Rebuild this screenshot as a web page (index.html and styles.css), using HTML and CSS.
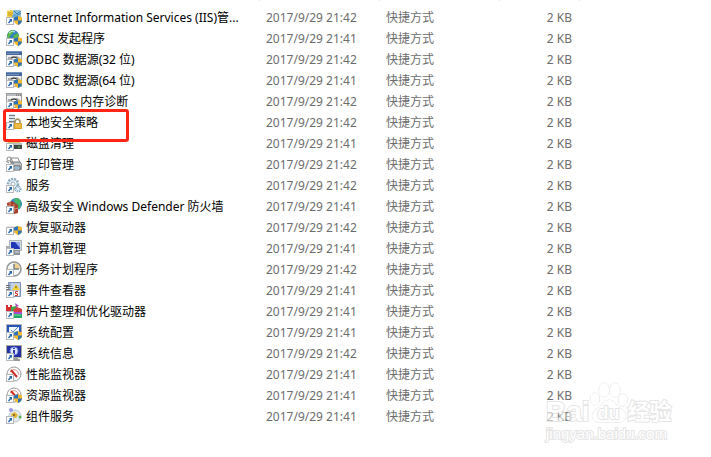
FILE: index.html
```
<!DOCTYPE html>
<html lang="zh-Hans">
<head>
	<meta charset="utf-8" />
	<meta name="viewport" content="width=device-width, initial-scale=1.0">
	<title>管理工具</title>
	<link rel="stylesheet" href="styles.css">
</head>
<body>

	<!-- shared icon parts -->
	<svg class="defs" aria-hidden="true">
		<symbol id="arrow" viewBox="0 0 16 16">
			<rect x=".5" y="8.500" width="7" height="7" fill="#fff" stroke="#b4b8bc"/>
			<path d="M3 10h3v3L5 12.200 3 14.500 2 13.500l2-2.500z" fill="#2467a8"/>
		</symbol>
		<symbol id="shield" viewBox="0 0 16 16">
			<path d="M12 7l4 1.500v3Q15.500 14.500 12 16 8.500 14.500 8 11.500v-3z" fill="#f3b82c"/>
			<path d="M12 7v4.500H8v-3zM12 11.500h4Q15.500 14.500 12 16z" fill="#2d73b8"/>
		</symbol>
		<symbol id="odbc" viewBox="0 0 16 16">
			<rect x=".5" y=".5" width="15" height="14" fill="#eef0f2" stroke="#a3aebb"/>
			<path d="M0 0h16v4H0z" fill="#46679c"/>
			<path d="M0 0h16v1H0zM1 2h12v1H1z" fill="#7593bf"/>
			<path d="M2 7h3l2-1h4l3 2" fill="none" stroke="#aaa" stroke-width="2"/>
			<path d="M5 7q3-2 6 0" fill="none" stroke="#333"/>
			<use href="#shield"/><use href="#arrow"/>
		</symbol>
		<symbol id="gauge" viewBox="0 0 16 16">
			<circle cx="8" cy="8" r="7" fill="#fff" stroke="#999"/>
			<path d="M4 6q4-5 8 0l1 3" fill="none" stroke="#d99a93"/>
			<path d="M5 4l6 7" stroke="#cf2b20" stroke-width="2"/>
		</symbol>
	</svg>

	<main class="file-list">
		<table>
			<colgroup>
				<col class="col-name"><col class="col-date"><col class="col-type"><col class="col-size"><col>
			</colgroup>
			<thead>
				<tr><th></th><th></th><th></th><th></th><th></th></tr>
			</thead>
			<tbody>
				<tr>
					<td><a href="#"><svg viewBox="0 0 16 16"><path d="M1 2l5-1 2 2v6H1z" fill="#f3cf45"/><path d="M2 4h5M2 6h4" stroke="#c89420"/><path d="M7 1h7l1 3v4H7z" fill="#8fc1df"/><path d="M8 2l3 3 4-3M10 7l5-3" stroke="#397ea9" fill="none"/><circle cx="9" cy="8" r="3" fill="#63a9d4"/><use href="#shield"/><use href="#arrow"/></svg><span>Internet Information Services (IIS)管...</span></a></td>
					<td>2017/9/29 21:42</td><td>快捷方式</td><td>2 KB</td><td></td>
				</tr>
				<tr>
					<td><a href="#"><svg viewBox="0 0 16 16"><circle cx="7" cy="6" r="6" fill="#347fc0"/><path d="M2 3q3-4 6-3L7 3 4 6 3 9 1 7zM8 5l4-2 1 4-3 4-3-2z" fill="#5ab848"/><path d="M3 3q3-3 6-1" stroke="#cbefff" fill="none"/><use href="#shield"/><use href="#arrow"/></svg><span>iSCSI 发起程序</span></a></td>
					<td>2017/9/29 21:41</td><td>快捷方式</td><td>2 KB</td><td></td>
				</tr>
				<tr>
					<td><a href="#"><svg viewBox="0 0 16 16"><use href="#odbc"/></svg><span>ODBC 数据源(32 位)</span></a></td>
					<td>2017/9/29 21:42</td><td>快捷方式</td><td>2 KB</td><td></td>
				</tr>
				<tr>
					<td><a href="#"><svg viewBox="0 0 16 16"><use href="#odbc"/></svg><span>ODBC 数据源(64 位)</span></a></td>
					<td>2017/9/29 21:41</td><td>快捷方式</td><td>2 KB</td><td></td>
				</tr>
				<tr>
					<td><a href="#"><svg viewBox="0 0 16 16"><rect x=".5" y=".5" width="15" height="14" fill="#f7f7f7" stroke="#9b9b9b"/><path d="M1 2h14" stroke="#b9bdc1" stroke-width="2"/><path d="M10 2h1M12 2h1M14 2h1" stroke="#555"/><path d="M2 7h3l2-1h4l3 2" fill="none" stroke="#aaa" stroke-width="2"/><path d="M5 7q3-2 6 0" stroke="#333" fill="none"/><use href="#shield"/><use href="#arrow"/></svg><span>Windows 内存诊断</span></a></td>
					<td>2017/9/29 21:42</td><td>快捷方式</td><td>2 KB</td><td></td>
				</tr>
				<tr class="marked">
					<td><a href="#"><svg viewBox="0 0 16 16"><path d="M3 0h6v13H3z" fill="#dfe6e9"/><path d="M3 1.500h6M3 4.500h6M3 7.500h6" stroke="#6c7a82"/><path d="M9 10V7q2.500-4 5 0v3" fill="none" stroke="#9b8c58" stroke-width="1.500"/><path d="M8 9h8v6H8z" fill="#d9a022"/><path d="M9 11h6M9 13h6" stroke="#ffd866"/><use href="#arrow"/></svg><span>本地安全策略</span></a></td>
					<td>2017/9/29 21:42</td><td>快捷方式</td><td>2 KB</td><td></td>
				</tr>
				<tr>
					<td><a href="#"><svg viewBox="0 0 16 16"><path d="M3 4h10l2 5H1z" fill="#d8c56b"/><path d="M2 8h14v5H2z" fill="#b9bfc0"/><path d="M8 10h8v4H8z" fill="#404745"/><path d="M12 12h2" stroke="#60db48"/><use href="#arrow"/></svg><span>磁盘清理</span></a></td>
					<td>2017/9/29 21:41</td><td>快捷方式</td><td>2 KB</td><td></td>
				</tr>
				<tr>
					<td><a href="#"><svg viewBox="0 0 16 16"><path d="M5 2h7l2 5H7z" fill="#fff" stroke="#888"/><path d="M5 6h9l2 3v4H5z" fill="#bfc3c5" stroke="#74797c"/><path d="M8 10h6v4H8z" fill="#e9f4fd" stroke="#555"/><path d="M9 12h4" stroke="#328acb"/><circle cx="3" cy="3" r="2" fill="none" stroke="#888"/><path d="M4 5l4 3M0 5l3 2" stroke="#777"/><use href="#arrow"/></svg><span>打印管理</span></a></td>
					<td>2017/9/29 21:42</td><td>快捷方式</td><td>2 KB</td><td></td>
				</tr>
				<tr>
					<td><a href="#"><svg viewBox="0 0 16 16"><circle cx="7" cy="7" r="5" fill="#e5eff5" stroke="#8eabbc" stroke-width="2.500" stroke-dasharray="2 1"/><circle cx="7" cy="7" r="2" fill="#fff" stroke="#9bb4c3"/><circle cx="12" cy="12" r="2.500" fill="#e7f2fa" stroke="#6c9cbc" stroke-width="2" stroke-dasharray="1 1"/><use href="#arrow"/></svg><span>服务</span></a></td>
					<td>2017/9/29 21:42</td><td>快捷方式</td><td>2 KB</td><td></td>
				</tr>
				<tr>
					<td><a href="#"><svg viewBox="0 0 16 16"><circle cx="10" cy="6" r="6" fill="#3189c4"/><path d="M8 1l4-1 3 3-2 5-4-3zM12 7l3-1-1 4-3 1z" fill="#48b765"/><path d="M1 5l5-2 6 4v8l-4 1-7-4z" fill="#a5422e"/><path d="M1 7l8 4 3-1M4 4v5M8 6v8" stroke="#dc9277" fill="none"/><use href="#arrow"/></svg><span>高级安全 Windows Defender 防火墙</span></a></td>
					<td>2017/9/29 21:41</td><td>快捷方式</td><td>2 KB</td><td></td>
				</tr>
				<tr>
					<td><a href="#"><svg viewBox="0 0 16 16"><path d="M2 7h12l2 2v5H0V9z" fill="#bfc1c2"/><path d="M2 7h12l1 2H1z" fill="#e2e2e2"/><use href="#shield"/><use href="#arrow"/></svg><span>恢复驱动器</span></a></td>
					<td>2017/9/29 21:42</td><td>快捷方式</td><td>2 KB</td><td></td>
				</tr>
				<tr>
					<td><a href="#"><svg viewBox="0 0 16 16"><path d="M0 6h5v5H0z" fill="#a8adb1"/><path d="M3.500 .5h12v10h-12z" fill="#d7dce1" stroke="#a9b1b9"/><path d="M5 2h9v7H5z" fill="#2038b8"/><path d="M9 2h5v6z" fill="#93a7ef"/><path d="M8 10h6v5H8z" fill="#8c9499"/><path d="M9 12h4" stroke="#d9dfe2"/><use href="#arrow"/></svg><span>计算机管理</span></a></td>
					<td>2017/9/29 21:41</td><td>快捷方式</td><td>2 KB</td><td></td>
				</tr>
				<tr>
					<td><a href="#"><svg viewBox="0 0 16 16"><circle cx="8" cy="8" r="7" fill="#f5f7f8" stroke="#929799" stroke-width="1.500"/><path d="M8 8V2a6 6 0 0 1 6 6z" fill="#f0d08b"/><path d="M8 3v5h5" fill="none" stroke="#76848b" stroke-width="1.500"/><use href="#arrow"/></svg><span>任务计划程序</span></a></td>
					<td>2017/9/29 21:42</td><td>快捷方式</td><td>2 KB</td><td></td>
				</tr>
				<tr>
					<td><a href="#"><svg viewBox="0 0 16 16"><path d="M2.500 .5h12v14h-12z" fill="#9db5dc" stroke="#7d90b5"/><path d="M5 1h9v13H5z" fill="#c3d1e8"/><path d="M0 3.500h4M0 5.500h4M0 7.500h4" stroke="#777"/><path d="M10 2l4 6H6z" fill="#f3ce35"/><path d="M10 4v2" stroke="#685109"/><path d="M8 9h5v5H8z" fill="#fff"/><path d="M12 9.500H9.500v2h2v2H9" stroke="#d53c2d" fill="none"/><use href="#arrow"/></svg><span>事件查看器</span></a></td>
					<td>2017/9/29 21:41</td><td>快捷方式</td><td>2 KB</td><td></td>
				</tr>
				<tr>
					<td><a href="#"><svg viewBox="0 0 16 16"><path d="M0 2h2v2h2V2h2v6H0z" fill="#d82d32"/><path d="M5 4l5-1 2 3-4 3H5z" fill="#3aa44c"/><path d="M9 0l4 3-3 1z" fill="#a842ba"/><path d="M7 7l4-3 5 2v4H7z" fill="#d83f42"/><path d="M7 9h9v3H7z" fill="#a64ed1"/><path d="M7 11h9v4H7z" fill="#26a66d"/><path d="M8 12h7" stroke="#71e09a"/><use href="#arrow"/></svg><span>碎片整理和优化驱动器</span></a></td>
					<td>2017/9/29 21:41</td><td>快捷方式</td><td>2 KB</td><td></td>
				</tr>
				<tr>
					<td><a href="#"><svg viewBox="0 0 16 16"><path d="M0 0h16v14H0z" fill="#aeb2b5"/><path d="M1 1h14v11H1z" fill="#2754ba"/><path d="M3 3h10v8H3z" fill="#eef6ff"/><path d="M5 6l2 2 5-5" fill="none" stroke="#608dcb"/><use href="#shield"/><use href="#arrow"/></svg><span>系统配置</span></a></td>
					<td>2017/9/29 21:41</td><td>快捷方式</td><td>2 KB</td><td></td>
				</tr>
				<tr>
					<td><a href="#"><svg viewBox="0 0 16 16"><path d="M0 0h16v13H0z" fill="#aaa99f"/><path d="M1 1h14v11H1z" fill="#2331a4"/><circle cx="8" cy="6" r="4" fill="#e4e8ff" stroke="#7486dc"/><path d="M8 3v1M8 5v4" stroke="#2638b4" stroke-width="2"/><path d="M8 13h4v1h2v2H7z" fill="#999"/><use href="#arrow"/></svg><span>系统信息</span></a></td>
					<td>2017/9/29 21:42</td><td>快捷方式</td><td>2 KB</td><td></td>
				</tr>
				<tr>
					<td><a href="#"><svg viewBox="0 0 16 16"><use href="#gauge"/><use href="#arrow"/></svg><span>性能监视器</span></a></td>
					<td>2017/9/29 21:41</td><td>快捷方式</td><td>2 KB</td><td></td>
				</tr>
				<tr>
					<td><a href="#"><svg viewBox="0 0 16 16"><use href="#gauge"/><use href="#shield"/><use href="#arrow"/></svg><span>资源监视器</span></a></td>
					<td>2017/9/29 21:41</td><td>快捷方式</td><td>2 KB</td><td></td>
				</tr>
				<tr>
					<td><a href="#"><svg viewBox="0 0 16 16"><circle cx="9" cy="8" r="6" fill="#e2eaef" stroke="#bdc7cc"/><circle cx="5" cy="2" r="2" fill="#9999df"/><path d="M5 6l4-2 3 3-2 3H6z" fill="#e3b832"/><circle cx="8" cy="7" r="1" fill="#6b5c25"/><circle cx="14" cy="9" r="1.500" fill="#5bb45a"/><use href="#arrow"/></svg><span>组件服务</span></a></td>
					<td>2017/9/29 21:41</td><td>快捷方式</td><td>2 KB</td><td></td>
				</tr>
			</tbody>
		</table>

		<div class="watermark">
			<div class="brand">
				<span>Bai</span>
				<div class="paw">
					<svg viewBox="0 0 38 42">
						<ellipse cx="5" cy="17" rx="4.500" ry="6"/>
						<ellipse cx="14" cy="8" rx="5" ry="7"/>
						<ellipse cx="25" cy="8" rx="5" ry="7"/>
						<ellipse cx="33" cy="18" rx="4.500" ry="6"/>
						<path d="M19 18C14 18 12 23 8 26 3 29 1 33 3 37c3 5 10 3 16 3s13 2 16-3c2-4 0-8-5-11-4-3-6-8-11-8z"/>
					</svg>
					<span>du</span>
				</div>
				<span class="cn">经验</span>
			</div>
			<div class="site">jingyan.baidu.com</div>
		</div>
	</main>

</body>
</html>
```

FILE: styles.css
```
/* global */
*,
:after,
:before {
	box-sizing: border-box;
}
body {
	margin: 0;
	background: #fff;
	color: #000;
	font-family: "Noto Sans","Noto Sans CJK SC",sans-serif;
	font-size: 12px;
	line-height: 20px;
}
a {color:inherit;text-decoration:none;}
.defs {position:absolute;width:0;height:0;}

/* file list */
.file-list {position:relative;padding-bottom:30px;}
.file-list table {
	width: 100%;
	table-layout: fixed;
	border-collapse: collapse;
}
.col-name {width:260px;}
.col-date {width:120px;}
.col-type {width:120px;}
.col-size {width:80px;}

.file-list th {
	height: 7px;
	padding: 0;
	background: linear-gradient(#e0e0e0,#e0e0e0) right top / 1px 1px no-repeat;
}
.file-list th:last-child {background:none;}
.file-list td {
	height: 21px;
	padding: 1px 6px 0;
	color: #6d6d6d;
	vertical-align: top;
	white-space: nowrap;
}
.file-list td:first-child {position:relative;color:#000;}
.file-list td:nth-child(4) {padding-right:8px;text-align:right;}
.file-list td a {display:flex;align-items:flex-start;gap:4px;}
.file-list td svg {flex:none;width:16px;height:16px;margin-top:1px;}

/* red frame round the marked row */
.marked td:first-child:after {
	content: "";
	position: absolute;
	top: -3px;
	left: 3px;
	width: 126px;
	height: 33px;
	border: 3px solid #ff2616;
	border-radius: 3px;
	pointer-events: none;
	z-index: 1;
}

/* watermark */
.watermark {
	position: absolute;
	right: 39px;
	bottom: 13px;
	width: 126px;
	color: #fff;
	font-family: "Liberation Sans","Noto Sans CJK SC",sans-serif;
	opacity: .6;
	pointer-events: none;
	-webkit-text-stroke: 2px #d4d4d4;
	paint-order: stroke fill;
}
.watermark .brand {
	display: flex;
	align-items: flex-end;
	font-size: 28px;
	font-weight: bold;
	line-height: 24px;
}
.watermark .paw {position:relative;width:38px;height:42px;}
.watermark .paw svg {
	display: block;
	width: 38px;
	height: 42px;
	fill: #fff;
	stroke: #ccc;
}
.watermark .paw span {
	position: absolute;
	right: 0;
	bottom: 1px;
	left: 0;
	font-size: 18px;
	line-height: 20px;
	text-align: center;
}
.watermark .cn {font-size:22px;}
.watermark .site {font-size:15px;line-height:20px;}
```
